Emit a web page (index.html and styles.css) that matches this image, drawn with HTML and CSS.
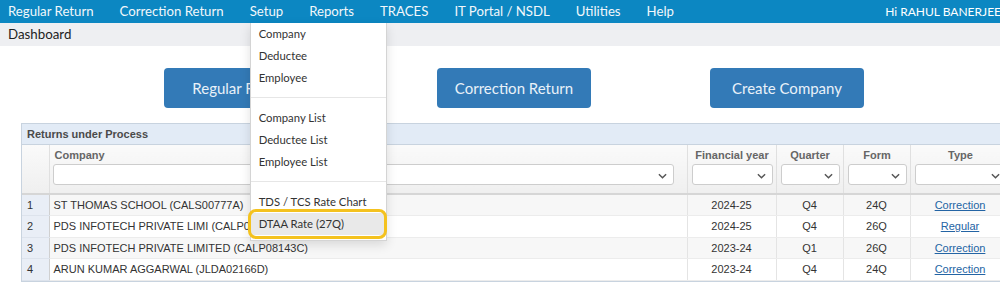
FILE: index.html
```html
<!DOCTYPE html>
<html>
<head>
<meta charset="utf-8">
<link rel="stylesheet" href="styles.css">
</head>
<body>
<div class="page">
  <nav class="topnav">
    <ul class="nav-list">
      <li class="nav-item">Regular Return</li>
      <li class="nav-item">Correction Return</li>
      <li class="nav-item nav-item--open">Setup
        <div class="menu">
          <div class="menu-item">Company</div>
          <div class="menu-item">Deductee</div>
          <div class="menu-item">Employee</div>
          <div class="menu-divider"></div>
          <div class="menu-item">Company List</div>
          <div class="menu-item">Deductee List</div>
          <div class="menu-item">Employee List</div>
          <div class="menu-divider"></div>
          <div class="menu-item">TDS / TCS Rate Chart</div>
          <div class="menu-item menu-item--active">DTAA Rate (27Q)<span class="mark"></span></div>
        </div>
      </li>
      <li class="nav-item">Reports</li>
      <li class="nav-item">TRACES</li>
      <li class="nav-item">IT Portal / NSDL</li>
      <li class="nav-item">Utilities</li>
      <li class="nav-item">Help</li>
    </ul>
    <span class="greeting">Hi RAHUL BANERJEE</span>
  </nav>
  <div class="crumb">Dashboard</div>
  <div class="actions">
    <button class="btn">Regular Return</button>
    <button class="btn">Correction Return</button>
    <button class="btn">Create Company</button>
  </div>
  <section class="panel">
    <div class="panel-title">Returns under Process</div>
    <table class="grid">
      <colgroup>
        <col class="c-num"><col class="c-company"><col class="c-fy"><col class="c-q"><col class="c-form"><col class="c-type">
      </colgroup>
      <thead>
        <tr>
          <th class="h-num"></th>
          <th class="h-left"><div class="h-label">Company</div><div class="sel sel--company"><svg class="chev" viewBox="0 0 10 6"><path d="M1 1l4 4 4-4" fill="none" stroke="#555" stroke-width="1.6"/></svg></div></th>
          <th><div class="h-label">Financial year</div><div class="sel"><svg class="chev" viewBox="0 0 10 6"><path d="M1 1l4 4 4-4" fill="none" stroke="#555" stroke-width="1.6"/></svg></div></th>
          <th><div class="h-label">Quarter</div><div class="sel"><svg class="chev" viewBox="0 0 10 6"><path d="M1 1l4 4 4-4" fill="none" stroke="#555" stroke-width="1.6"/></svg></div></th>
          <th><div class="h-label">Form</div><div class="sel"><svg class="chev" viewBox="0 0 10 6"><path d="M1 1l4 4 4-4" fill="none" stroke="#555" stroke-width="1.6"/></svg></div></th>
          <th><div class="h-label">Type</div><div class="sel"><svg class="chev" viewBox="0 0 10 6"><path d="M1 1l4 4 4-4" fill="none" stroke="#555" stroke-width="1.6"/></svg></div></th>
        </tr>
      </thead>
      <tbody>
        <tr class="odd"><td class="num">1</td><td class="company">ST THOMAS SCHOOL (CALS00777A)</td><td>2024-25</td><td>Q4</td><td>24Q</td><td><a class="lnk">Correction</a></td></tr>
        <tr><td class="num">2</td><td class="company">PDS INFOTECH PRIVATE LIMI (CALP08143C)</td><td>2024-25</td><td>Q4</td><td>26Q</td><td><a class="lnk">Regular</a></td></tr>
        <tr class="odd"><td class="num">3</td><td class="company">PDS INFOTECH PRIVATE LIMITED (CALP08143C)</td><td>2023-24</td><td>Q1</td><td>26Q</td><td><a class="lnk">Correction</a></td></tr>
        <tr><td class="num">4</td><td class="company">ARUN KUMAR AGGARWAL (JLDA02166D)</td><td>2023-24</td><td>Q4</td><td>24Q</td><td><a class="lnk">Correction</a></td></tr>
      </tbody>
    </table>
  </section>
</div>
</body>
</html>
```

FILE: styles.css
```css
* { box-sizing: border-box; }
html, body { margin: 0; padding: 0; background: #fff; overflow: hidden; }
.page {
  width: 1040px;
  font-family: Lato, "Open Sans", sans-serif;
  color: #333;
}
.topnav {
  height: 23px;
  background: #0c87c2;
  display: flex;
  align-items: center;
  padding: 0 8px;
}
.nav-list {
  list-style: none;
  margin: 0;
  padding: 0;
  display: flex;
  gap: 26px;
}
.nav-item {
  position: relative;
  height: 23px;
  line-height: 23px;
  color: #f2f7fb;
  font-size: 13.2px;
  white-space: nowrap;
}
.greeting {
  margin-left: auto;
  margin-right: 31px;
  color: #fff;
  font-size: 12px;
  white-space: nowrap;
}
.menu {
  position: absolute;
  top: 100%;
  left: 0;
  width: 137px;
  background: #fff;
  border: 1px solid #d4d4d4;
  border-top: none;
  box-shadow: 0 4px 10px rgba(0,0,0,0.12);
  padding-bottom: 5px;
  z-index: 10;
}
.menu-item {
  position: relative;
  height: 22px;
  line-height: 22px;
  padding: 0 8px;
  font-size: 11.3px;
  color: #333;
  white-space: nowrap;
}
.menu-item--active { background: #e9e9e9; }
.menu-divider {
  height: 1px;
  margin: 8px 0 9px;
  background: #e6e6e6;
}
.mark {
  position: absolute;
  top: -4px;
  bottom: -4px;
  left: -3px;
  right: -1px;
  border: 3px solid #f4c21f;
  border-radius: 8px;
}
.crumb {
  height: 23px;
  line-height: 23px;
  background: #eeeff2;
  padding: 0 8px;
  font-size: 13.3px;
  color: #222;
}
.actions {
  display: flex;
  gap: 119px;
  padding: 22px 0 0 164px;
  height: 77px;
}
.btn {
  width: 154px;
  height: 40px;
  border: none;
  border-radius: 4px;
  background: #337ab7;
  color: #e9f1f9;
  font-family: Lato, "Open Sans", sans-serif;
  font-size: 15px;
  padding: 0;
}
.panel {
  margin-left: 21px;
  border: 1px solid #c8d3df;
  border-right: none;
  font-family: "Liberation Sans", Arial, sans-serif;
  font-size: 11px;
}
.panel-title {
  height: 21px;
  line-height: 20px;
  background: #e2ebf6;
  border-bottom: 1px solid #c8d3df;
  padding-left: 5px;
  font-weight: bold;
  color: #4a4a4a;
}
.grid {
  border-collapse: collapse;
  table-layout: fixed;
  width: 988px;
}
.c-num { width: 27px; }
.c-company { width: 638px; }
.c-fy { width: 89px; }
.c-q { width: 67px; }
.c-form { width: 67px; }
.c-type { width: 100px; }
.grid th {
  height: 49px;
  padding: 3px 3px 4px 4px;
  vertical-align: top;
  background: linear-gradient(#fafafa, #efefef);
  border-right: 1px solid #e0e0e0;
  border-bottom: 2px solid #d6d6d6;
  font-weight: bold;
  color: #666;
  text-align: center;
}
.grid th.h-left { text-align: left; padding-right: 13px; padding-left: 3px; }
.grid th.h-left .h-label { padding-left: 2px; }
.h-num { border-right: 1px solid #d0d0d0; }
.h-label { height: 16px; line-height: 14px; white-space: nowrap; }
.sel {
  position: relative;
  height: 21px;
  background: #fff;
  border: 1px solid #cdcdcd;
  border-radius: 3px;
}
.chev {
  position: absolute;
  right: 6px;
  top: 8px;
  width: 9px;
  height: 6px;
}
.grid td {
  height: 21.5px;
  padding: 0 4px;
  text-align: center;
  color: #333;
  border-right: 1px solid #e4e4e4;
  border-bottom: 1px solid #ececec;
  white-space: nowrap;
  overflow: hidden;
}
.grid tr.odd td { background: #f7f7f7; }
.grid td.num {
  text-align: left;
  padding-left: 5px;
  background: #e9eef6 !important;
  border-right: 1px solid #d0d0d0;
  border-bottom: 1px solid #dde3ec;
}
.grid td.company { text-align: left; padding-left: 4px; }
.lnk {
  color: #2364a4;
  text-decoration: underline;
}
```
